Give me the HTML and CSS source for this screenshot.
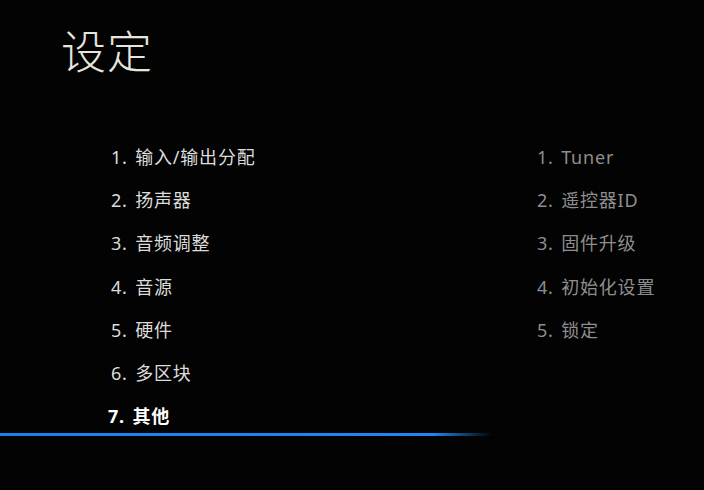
FILE: index.html
```html
<!DOCTYPE html>
<html lang="zh-CN">
<head>
<meta charset="utf-8">
<title>设定</title>
<link rel="stylesheet" href="styles.css">
</head>
<body>
<div class="screen">
  <h1 class="title">设定</h1>
  <div class="menus">
    <div class="main-col">
      <ul class="list main-list">
        <li class="item">1. 输入/输出分配</li>
        <li class="item">2. 扬声器</li>
        <li class="item">3. 音频调整</li>
        <li class="item">4. 音源</li>
        <li class="item">5. 硬件</li>
        <li class="item">6. 多区块</li>
        <li class="item selected">7. 其他</li>
      </ul>
      <div class="focus-line"></div>
    </div>
    <div class="sub-col">
      <ul class="list sub-list">
        <li class="item">1. Tuner</li>
        <li class="item">2. 遥控器ID</li>
        <li class="item">3. 固件升级</li>
        <li class="item">4. 初始化设置</li>
        <li class="item">5. 锁定</li>
      </ul>
    </div>
  </div>
</div>
</body>
</html>
```
FILE: styles.css
```css
html, body {
  margin: 0;
  padding: 0;
  background: #030303;
}
.screen {
  width: 704px;
  height: 490px;
  background: #030303;
  font-family: "Noto Sans", "Noto Sans CJK SC", sans-serif;
  overflow: hidden;
}
.title {
  margin: 0;
  padding: 24px 0 0 61px;
  height: 60px;
  font-size: 45px;
  line-height: 56px;
  font-weight: 300;
  color: #e6e6de;
  letter-spacing: 1px;
}
.menus {
  display: flex;
  padding-top: 52px;
}
.main-col {
  width: 492px;
}
.list {
  list-style: none;
  margin: 0;
  padding: 0;
}
.item {
  height: 43.2px;
  line-height: 43.2px;
  font-size: 18px;
  letter-spacing: 0.8px;
  word-spacing: 2px;
  white-space: nowrap;
}
.main-list {
  padding-left: 111px;
}
.main-list .item {
  color: #dcdcdc;
}
.main-list .item.selected {
  color: #ffffff;
  font-weight: 700;
  margin-left: -3px;
}
.focus-line {
  height: 3px;
  margin-top: -5px;
  background: linear-gradient(to right, #1c80ec 0%, #2088f2 88%, rgba(32,136,242,0) 100%);
}
.sub-col {
  padding-left: 45px;
}
.sub-list .item {
  color: #8e8e8e;
}
```
